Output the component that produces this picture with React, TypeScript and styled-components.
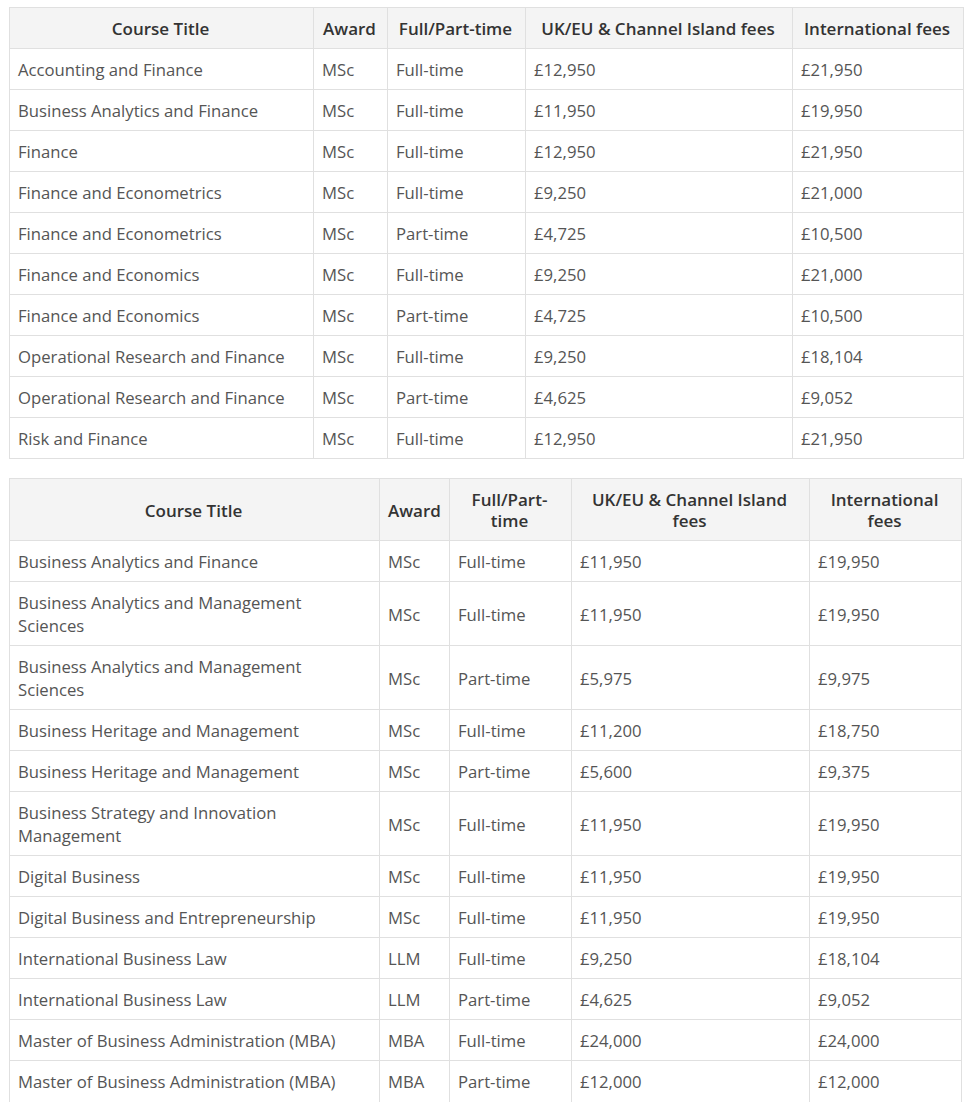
import React from 'react';
import styled, { createGlobalStyle } from 'styled-components';

const GlobalStyle = createGlobalStyle`
  html, body {
    margin: 0;
    padding: 0;
    background: #fff;
  }
`;

const Page = styled.div`
  display: flex;
  flex-direction: column;
  gap: 19px;
  padding: 7px 9px 0 9px;
  font-family: "Open Sans", "Noto Sans", sans-serif;
  line-height: 23px;
`;

const Table = styled.table<{ $width: number }>`
  width: ${(p) => p.$width}px;
  table-layout: fixed;
  border-collapse: collapse;
`;

const HeadCell = styled.th`
  background: #f4f4f4;
  color: #333;
  font-size: 17px;
  font-weight: 600;
  line-height: 21px;
  text-align: center;
  padding: 10px 10px 9px 8px;
  border: 1px solid #e0e0e0;
`;

const Cell = styled.td<{ $open?: boolean }>`
  color: #555;
  font-size: 16.7px;
  font-weight: 400;
  text-align: left;
  padding: 9px 12px 8px 8px;
  border: 1px solid #e0e0e0;
  border-bottom-color: ${(p) => (p.$open ? 'transparent' : '#e0e0e0')};
`;

type Row = [string, string, string, string, string];

const HEADERS = ['Course Title', 'Award', 'Full/Part-time', 'UK/EU & Channel Island fees', 'International fees'];

const first: Row[] = [
  ['Accounting and Finance', 'MSc', 'Full-time', '£12,950', '£21,950'],
  ['Business Analytics and Finance', 'MSc', 'Full-time', '£11,950', '£19,950'],
  ['Finance', 'MSc', 'Full-time', '£12,950', '£21,950'],
  ['Finance and Econometrics', 'MSc', 'Full-time', '£9,250', '£21,000'],
  ['Finance and Econometrics', 'MSc', 'Part-time', '£4,725', '£10,500'],
  ['Finance and Economics', 'MSc', 'Full-time', '£9,250', '£21,000'],
  ['Finance and Economics', 'MSc', 'Part-time', '£4,725', '£10,500'],
  ['Operational Research and Finance', 'MSc', 'Full-time', '£9,250', '£18,104'],
  ['Operational Research and Finance', 'MSc', 'Part-time', '£4,625', '£9,052'],
  ['Risk and Finance', 'MSc', 'Full-time', '£12,950', '£21,950'],
];

const second: Row[] = [
  ['Business Analytics and Finance', 'MSc', 'Full-time', '£11,950', '£19,950'],
  ['Business Analytics and Management Sciences', 'MSc', 'Full-time', '£11,950', '£19,950'],
  ['Business Analytics and Management Sciences', 'MSc', 'Part-time', '£5,975', '£9,975'],
  ['Business Heritage and Management', 'MSc', 'Full-time', '£11,200', '£18,750'],
  ['Business Heritage and Management', 'MSc', 'Part-time', '£5,600', '£9,375'],
  ['Business Strategy and Innovation Management', 'MSc', 'Full-time', '£11,950', '£19,950'],
  ['Digital Business', 'MSc', 'Full-time', '£11,950', '£19,950'],
  ['Digital Business and Entrepreneurship', 'MSc', 'Full-time', '£11,950', '£19,950'],
  ['International Business Law', 'LLM', 'Full-time', '£9,250', '£18,104'],
  ['International Business Law', 'LLM', 'Part-time', '£4,625', '£9,052'],
  ['Master of Business Administration (MBA)', 'MBA', 'Full-time', '£24,000', '£24,000'],
  ['Master of Business Administration (MBA)', 'MBA', 'Part-time', '£12,000', '£12,000'],
];

function FeeTable(props: { cols: number[]; rows: Row[]; open?: boolean }) {
  const total = props.cols.reduce((a, b) => a + b, 0);
  return (
    <Table $width={total}>
      <colgroup>
        {props.cols.map((w, i) => <col key={i} style={{ width: w }} />)}
      </colgroup>
      <thead>
        <tr>
          {HEADERS.map((h) => <HeadCell key={h}>{h}</HeadCell>)}
        </tr>
      </thead>
      <tbody>
        {props.rows.map((r, i) => (
          <tr key={i}>
            {r.map((c, j) => (
              <Cell key={j} $open={props.open && i === props.rows.length - 1}>{c}</Cell>
            ))}
          </tr>
        ))}
      </tbody>
    </Table>
  );
}

export default function App() {
  return (
    <>
      <GlobalStyle />
      <Page>
        <FeeTable cols={[304, 74, 138, 267, 171]} rows={first} />
        <FeeTable cols={[370, 70, 122, 238, 152]} rows={second} open />
      </Page>
    </>
  );
}
